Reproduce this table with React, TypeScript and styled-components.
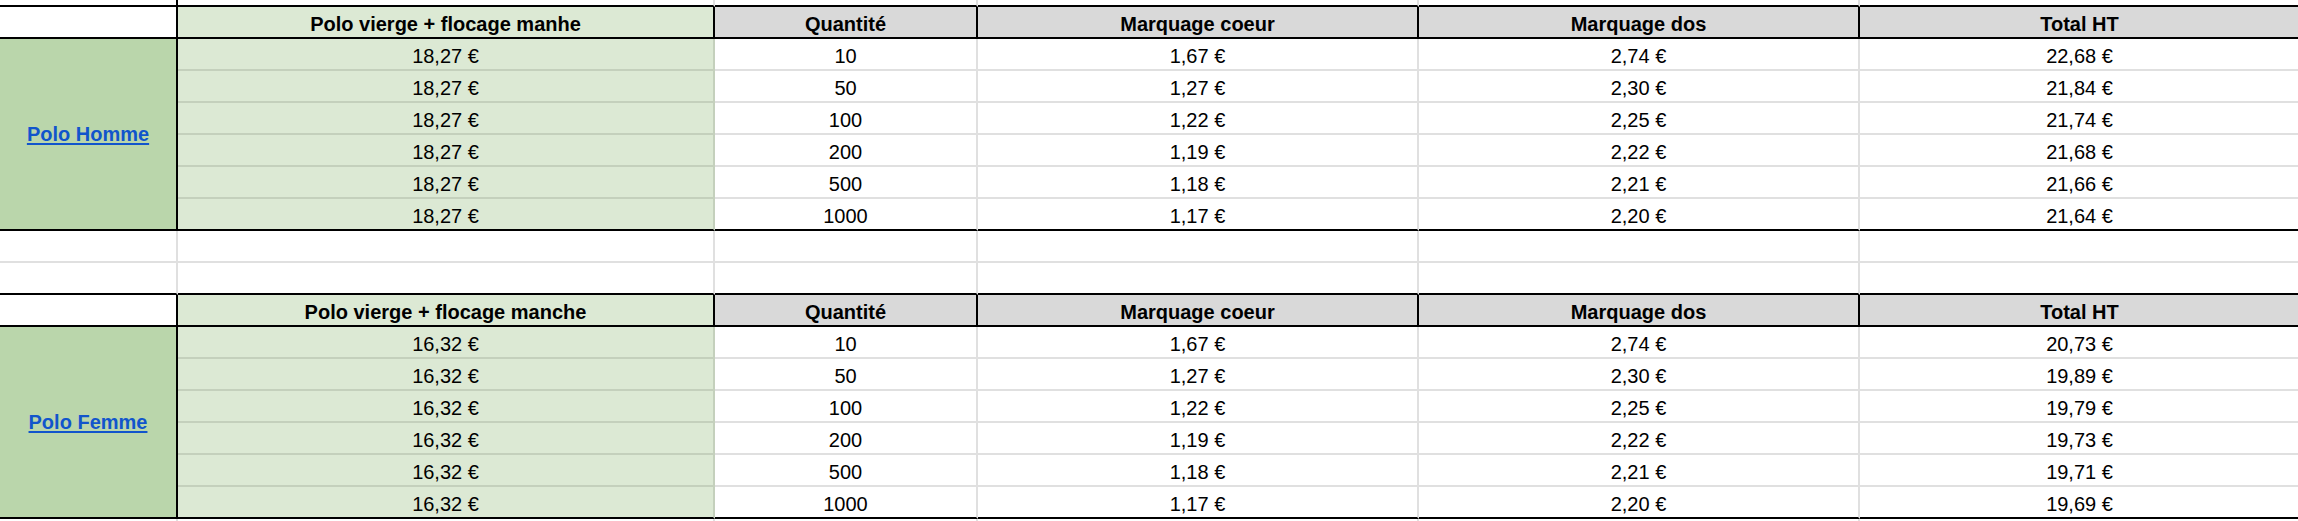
import React from "react";
import styled, { createGlobalStyle } from "styled-components";

const GlobalStyle = createGlobalStyle`
  html, body {
    margin: 0;
    padding: 0;
    background: #ffffff;
    overflow: hidden;
  }
  body {
    font-family: "Liberation Sans", Arial, sans-serif;
  }
`;

const BLACK = "#000000";
const GRID = "#e0e0e0";
const GRID_GREEN = "#c4d0bc";
const GREEN_DARK = "#bad6ab";
const GREEN_LIGHT = "#dce9d4";
const HEADER_GRAY = "#d9d9d9";

const Sheet = styled.div`
  display: grid;
  grid-template-columns: 178px 537px 263px 441px 441px 441px;
  grid-template-rows: 7px repeat(7, 32px) repeat(2, 32px) repeat(7, 32px) 3px;
  width: 2301px;
  font-family: "Liberation Sans", Arial, sans-serif;
  font-size: 20px;
  color: #000000;
`;

const Cell = styled.div<{ $bg?: string; $rb: string; $bb?: string }>`
  box-sizing: border-box;
  display: flex;
  align-items: flex-end;
  justify-content: center;
  padding-bottom: 1px;
  line-height: 23px;
  white-space: nowrap;
  overflow: hidden;
  background: ${(p) => p.$bg ?? "#ffffff"};
  border-right: 2px solid ${(p) => p.$rb};
  border-bottom: ${(p) => (p.$bb ? `2px solid ${p.$bb}` : "0")};
`;

const HeaderCell = styled(Cell)`
  font-weight: 700;
`;

const LabelCell = styled(Cell)<{ $span: number }>`
  grid-row: span ${(p) => p.$span};
  align-items: center;
  padding-bottom: 0;
`;

const SheetLink = styled.a`
  color: #1155cc;
  font-weight: 700;
  text-decoration: underline;
  text-underline-offset: 2px;
  cursor: pointer;
`;

type Row = { qty: string; coeur: string; dos: string; total: string };

const shared = [
  { qty: "10", coeur: "1,67 €", dos: "2,74 €" },
  { qty: "50", coeur: "1,27 €", dos: "2,30 €" },
  { qty: "100", coeur: "1,22 €", dos: "2,25 €" },
  { qty: "200", coeur: "1,19 €", dos: "2,22 €" },
  { qty: "500", coeur: "1,18 €", dos: "2,21 €" },
  { qty: "1000", coeur: "1,17 €", dos: "2,20 €" },
];

const withTotals = (totals: string[]): Row[] =>
  shared.map((r, i) => ({ ...r, total: totals[i] }));

const blocks = [
  {
    label: "Polo Homme",
    title: "Polo vierge + flocage manhe",
    base: "18,27 €",
    rows: withTotals(["22,68 €", "21,84 €", "21,74 €", "21,68 €", "21,66 €", "21,64 €"]),
  },
  {
    label: "Polo Femme",
    title: "Polo vierge + flocage manche",
    base: "16,32 €",
    rows: withTotals(["20,73 €", "19,89 €", "19,79 €", "19,73 €", "19,71 €", "19,69 €"]),
  },
];

const headers = ["Quantité", "Marquage coeur", "Marquage dos", "Total HT"];

function EmptyRow({ firstRb, bb, keyBase }: { firstRb: string; bb?: string; keyBase: string }) {
  return (
    <>
      <Cell key={`${keyBase}-0`} $rb={firstRb} $bb={bb} />
      {[1, 2, 3, 4, 5].map((i) => (
        <Cell key={`${keyBase}-${i}`} $rb={GRID} $bb={bb} />
      ))}
    </>
  );
}

function Block({ block, idx }: { block: (typeof blocks)[number]; idx: number }) {
  const n = block.rows.length;
  return (
    <>
      <HeaderCell $rb={BLACK} $bb={BLACK} />
      <HeaderCell $bg={GREEN_LIGHT} $rb={BLACK} $bb={BLACK}>
        {block.title}
      </HeaderCell>
      {headers.map((h) => (
        <HeaderCell key={`${idx}-${h}`} $bg={HEADER_GRAY} $rb={BLACK} $bb={BLACK}>
          {h}
        </HeaderCell>
      ))}
      {block.rows.map((r, i) => {
        const last = i === n - 1;
        return (
          <React.Fragment key={`${idx}-${i}`}>
            {i === 0 && (
              <LabelCell $span={n} $bg={GREEN_DARK} $rb={BLACK} $bb={BLACK}>
                <SheetLink>{block.label}</SheetLink>
              </LabelCell>
            )}
            <Cell $bg={GREEN_LIGHT} $rb={GRID_GREEN} $bb={last ? BLACK : GRID_GREEN}>
              {block.base}
            </Cell>
            <Cell $rb={GRID} $bb={last ? BLACK : GRID}>{r.qty}</Cell>
            <Cell $rb={GRID} $bb={last ? BLACK : GRID}>{r.coeur}</Cell>
            <Cell $rb={GRID} $bb={last ? BLACK : GRID}>{r.dos}</Cell>
            <Cell $rb={GRID} $bb={last ? BLACK : GRID}>{r.total}</Cell>
          </React.Fragment>
        );
      })}
    </>
  );
}

export default function App() {
  return (
    <>
      <GlobalStyle />
      <Sheet>
        <EmptyRow keyBase="top" firstRb={BLACK} bb={BLACK} />
        <Block block={blocks[0]} idx={0} />
        <EmptyRow keyBase="gap1" firstRb={GRID} bb={GRID} />
        <EmptyRow keyBase="gap2" firstRb={GRID} bb={BLACK} />
        <Block block={blocks[1]} idx={1} />
        <EmptyRow keyBase="end" firstRb={GRID} />
      </Sheet>
    </>
  );
}
